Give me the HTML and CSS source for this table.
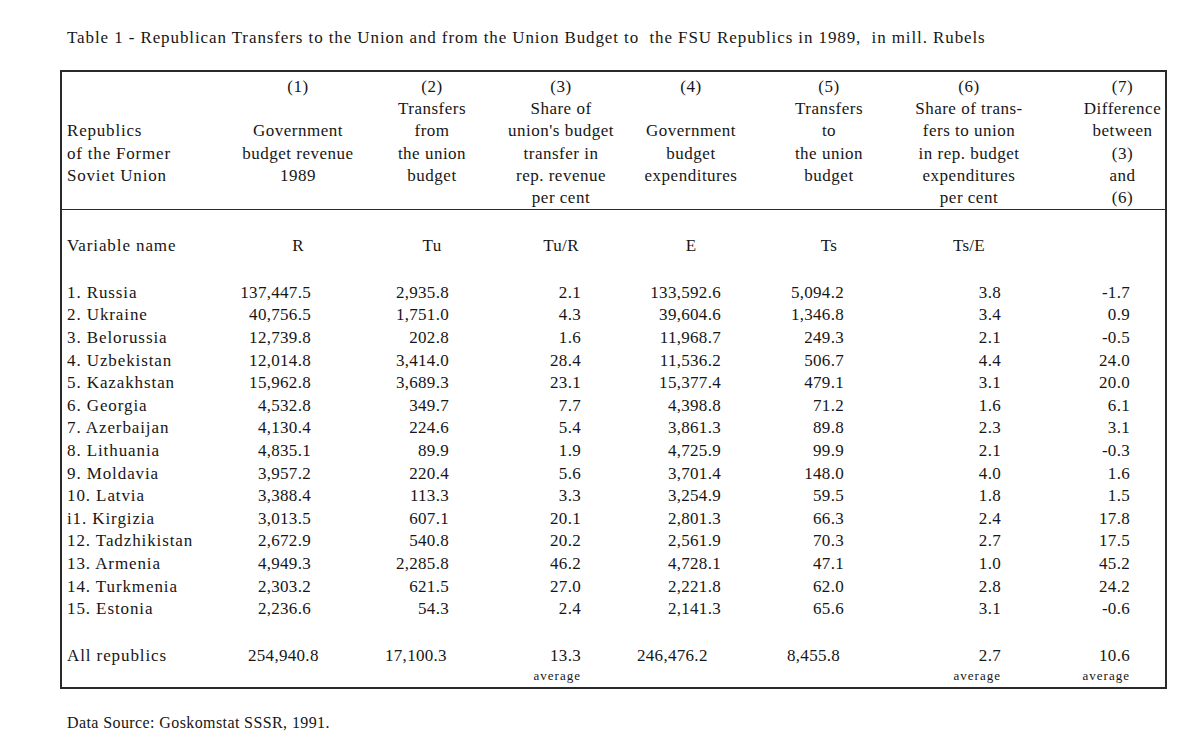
FILE: index.html
```html
<!DOCTYPE html>
<html lang="en">
<head>
<meta charset="utf-8">
<title>Table 1 - Republican Transfers</title>
<link rel="stylesheet" href="styles.css">
</head>
<body>
<div class="page">
  <p class="title">Table 1 - Republican Transfers to the Union and from the Union Budget to&nbsp; the FSU Republics in 1989,&nbsp; in mill. Rubels</p>
  <table class="data">
    <colgroup>
      <col class="c0"><col class="c1"><col class="c2"><col class="c3"><col class="c4"><col class="c5"><col class="c6"><col class="c7">
    </colgroup>
    <thead>
      <tr>
        <th class="name"><br><br>Republics<br>of the Former<br>Soviet Union</th>
        <th>(1)<br><br>Government<br>budget revenue<br>1989</th>
        <th>(2)<br>Transfers<br>from<br>the union<br>budget</th>
        <th>(3)<br>Share of<br>union's budget<br>transfer in<br>rep. revenue<br>per cent</th>
        <th>(4)<br><br>Government<br>budget<br>expenditures</th>
        <th>(5)<br>Transfers<br>to<br>the union<br>budget</th>
        <th>(6)<br>Share of trans-<br>fers to union<br>in rep. budget<br>expenditures<br>per cent</th>
        <th class="last">(7)<br>Difference<br>between<br>(3)<br>and<br>(6)</th>
      </tr>
    </thead>
    <tbody>
      <tr class="vars">
        <td class="name">Variable name</td>
        <td class="v1">R</td><td class="v2">Tu</td><td class="v3">Tu/R</td><td class="v4">E</td><td class="v5">Ts</td><td class="v6">Ts/E</td><td class="v7"></td>
      </tr>
      <tr class="first">
        <td class="name">1. Russia</td><td>137,447.5</td><td>2,935.8</td><td>2.1</td><td>133,592.6</td><td>5,094.2</td><td>3.8</td><td>-1.7</td>
      </tr>
      <tr><td class="name">2. Ukraine</td><td>40,756.5</td><td>1,751.0</td><td>4.3</td><td>39,604.6</td><td>1,346.8</td><td>3.4</td><td>0.9</td></tr>
      <tr><td class="name">3. Belorussia</td><td>12,739.8</td><td>202.8</td><td>1.6</td><td>11,968.7</td><td>249.3</td><td>2.1</td><td>-0.5</td></tr>
      <tr><td class="name">4. Uzbekistan</td><td>12,014.8</td><td>3,414.0</td><td>28.4</td><td>11,536.2</td><td>506.7</td><td>4.4</td><td>24.0</td></tr>
      <tr><td class="name">5. Kazakhstan</td><td>15,962.8</td><td>3,689.3</td><td>23.1</td><td>15,377.4</td><td>479.1</td><td>3.1</td><td>20.0</td></tr>
      <tr><td class="name">6. Georgia</td><td>4,532.8</td><td>349.7</td><td>7.7</td><td>4,398.8</td><td>71.2</td><td>1.6</td><td>6.1</td></tr>
      <tr><td class="name">7. Azerbaijan</td><td>4,130.4</td><td>224.6</td><td>5.4</td><td>3,861.3</td><td>89.8</td><td>2.3</td><td>3.1</td></tr>
      <tr><td class="name">8. Lithuania</td><td>4,835.1</td><td>89.9</td><td>1.9</td><td>4,725.9</td><td>99.9</td><td>2.1</td><td>-0.3</td></tr>
      <tr><td class="name">9. Moldavia</td><td>3,957.2</td><td>220.4</td><td>5.6</td><td>3,701.4</td><td>148.0</td><td>4.0</td><td>1.6</td></tr>
      <tr><td class="name">10. Latvia</td><td>3,388.4</td><td>113.3</td><td>3.3</td><td>3,254.9</td><td>59.5</td><td>1.8</td><td>1.5</td></tr>
      <tr><td class="name">i1. Kirgizia</td><td>3,013.5</td><td>607.1</td><td>20.1</td><td>2,801.3</td><td>66.3</td><td>2.4</td><td>17.8</td></tr>
      <tr><td class="name">12. Tadzhikistan</td><td>2,672.9</td><td>540.8</td><td>20.2</td><td>2,561.9</td><td>70.3</td><td>2.7</td><td>17.5</td></tr>
      <tr><td class="name">13. Armenia</td><td>4,949.3</td><td>2,285.8</td><td>46.2</td><td>4,728.1</td><td>47.1</td><td>1.0</td><td>45.2</td></tr>
      <tr><td class="name">14. Turkmenia</td><td>2,303.2</td><td>621.5</td><td>27.0</td><td>2,221.8</td><td>62.0</td><td>2.8</td><td>24.2</td></tr>
      <tr><td class="name">15. Estonia</td><td>2,236.6</td><td>54.3</td><td>2.4</td><td>2,141.3</td><td>65.6</td><td>3.1</td><td>-0.6</td></tr>
      <tr class="total">
        <td class="name">All republics</td><td class="lt">254,940.8</td><td class="lt">17,100.3</td><td>13.3</td><td class="lt">246,476.2</td><td class="lt">8,455.8</td><td>2.7</td><td>10.6</td>
      </tr>
      <tr class="avg">
        <td></td><td></td><td></td><td>average</td><td></td><td></td><td>average</td><td>average</td>
      </tr>
    </tbody>
  </table>
  <p class="source">Data Source: Goskomstat SSSR, 1991.</p>
</div>
</body>
</html>
```

FILE: styles.css
```css
html, body {
  margin: 0;
  padding: 0;
  background: #ffffff;
}

body {
  color: #161616;
  font-family: "Liberation Serif", "Times New Roman", serif;
  font-size: 17px;
}

.page {
  padding: 28px 0 0 60px;
}

.title {
  margin: 0 0 22px 7px;
  line-height: 20px;
  font-size: 17px;
  letter-spacing: 0.9px;
  white-space: nowrap;
}

.data {
  border-collapse: collapse;
  table-layout: fixed;
  width: 1105px;
  border-top: 2px solid #2a2a2a;
  border-bottom: 2px solid #2a2a2a;
  border-left: 2px solid #2a2a2a;
  border-right: 2px solid #2a2a2a;
}

.c0 { width: 170px; }
.c1 { width: 134px; }
.c2 { width: 134px; }
.c3 { width: 124px; }
.c4 { width: 136px; }
.c5 { width: 140px; }
.c6 { width: 140px; }
.c7 { width: 127px; }

.data th {
  font-weight: normal;
  vertical-align: top;
  text-align: center;
  line-height: 22.2px;
  letter-spacing: 0.5px;
  padding: 4px 0 0 0;
  white-space: nowrap;
  border-bottom: 1px solid #2a2a2a;
}

.data th.name {
  text-align: left;
  padding-left: 5px;
  letter-spacing: 0.8px;
}

.data th.last {
  padding-left: 41px;
}

.data td {
  padding: 0;
  line-height: 22.6px;
  letter-spacing: 0.3px;
  text-align: right;
  white-space: nowrap;
}

.data td.name {
  text-align: left;
  padding-left: 5px;
  letter-spacing: 0.9px;
}

.data td:nth-child(2) { padding-right: 54px; }
.data td:nth-child(3) { padding-right: 50px; }
.data td:nth-child(4) { padding-right: 42px; }
.data td:nth-child(5) { padding-right: 38px; }
.data td:nth-child(6) { padding-right: 55px; }
.data td:nth-child(7) { padding-right: 38px; }
.data td:nth-child(8) { padding-right: 35px; }

.vars td {
  padding-top: 25px;
}

.vars td.v1, .vars td.v2, .vars td.v3, .vars td.v4, .vars td.v5, .vars td.v6 {
  text-align: center;
  padding-right: 0;
}

.first td {
  padding-top: 24px;
}

.total td {
  padding-top: 24px;
}

.total td.lt {
  text-align: left;
}

.total td:nth-child(2) { padding-left: 17px; }
.total td:nth-child(3) { padding-left: 20px; }
.total td:nth-child(5) { padding-left: 14px; }
.total td:nth-child(6) { padding-left: 28px; }

.avg td {
  font-size: 13px;
  line-height: 17px;
  padding-bottom: 3px;
  letter-spacing: 1px;
}

.source {
  margin: 24px 0 0 7px;
  font-size: 16px;
  line-height: 20px;
  letter-spacing: 0.4px;
}
```
